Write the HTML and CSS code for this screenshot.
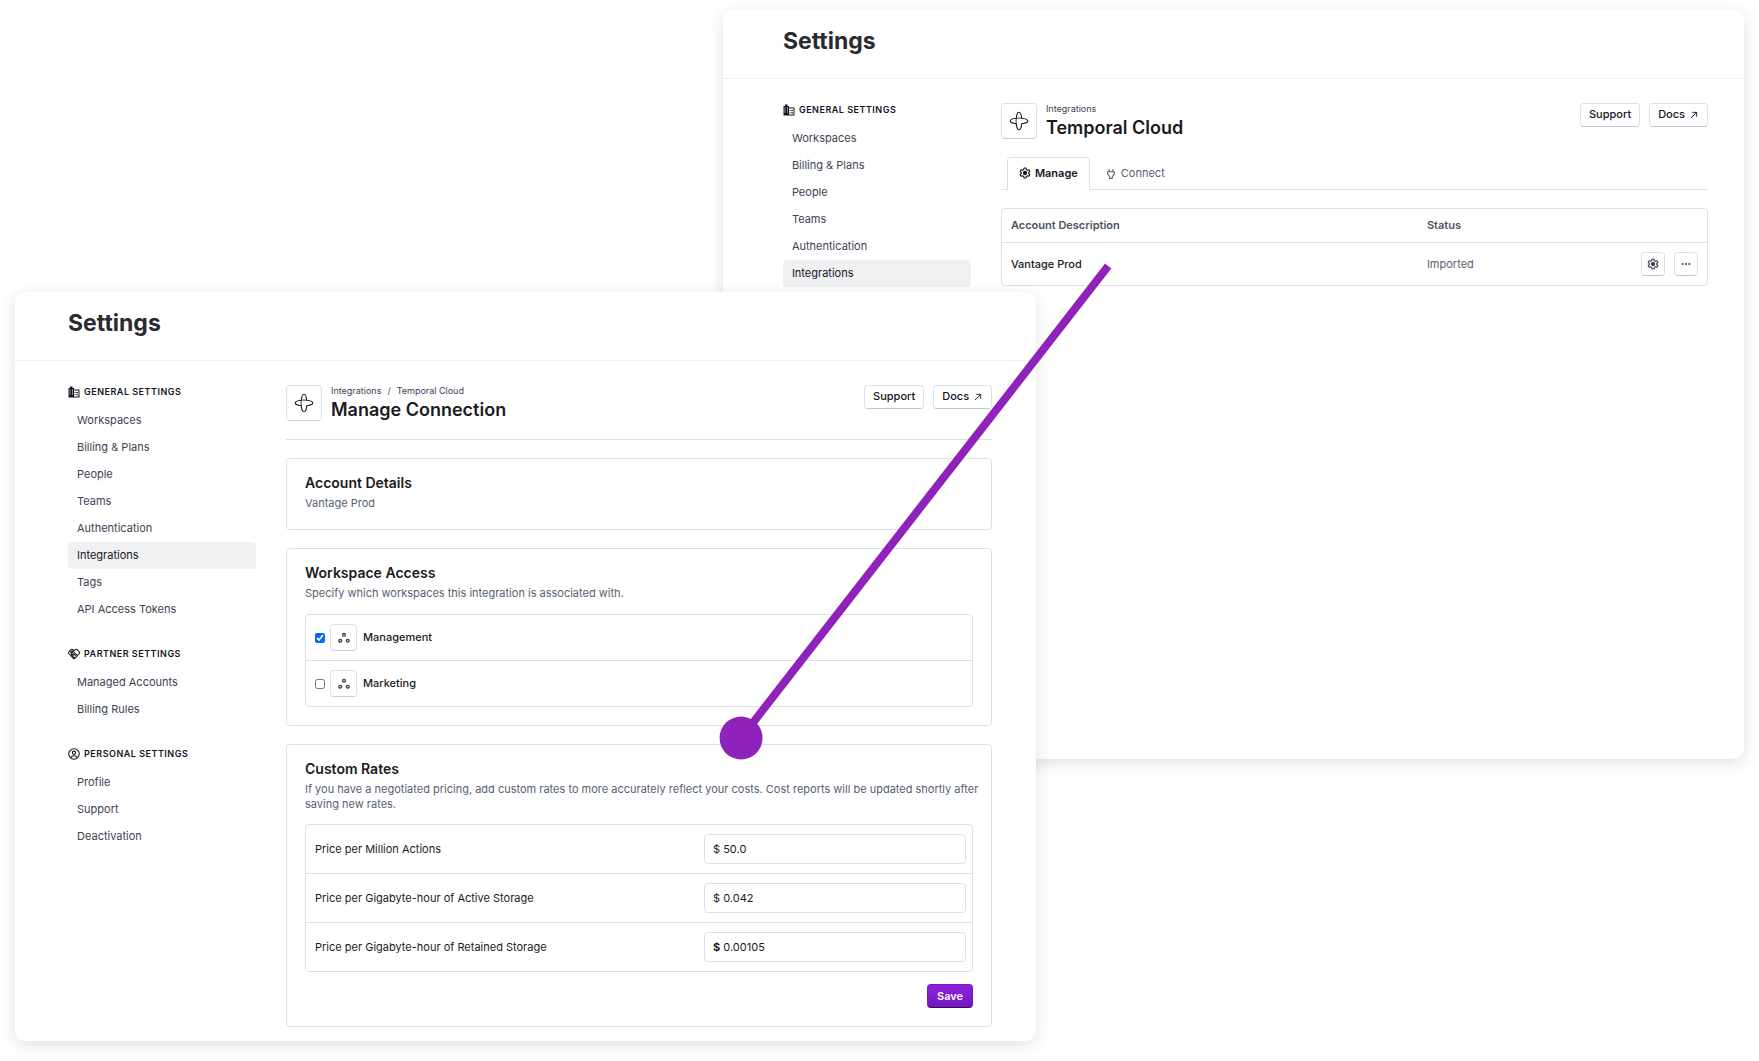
FILE: index.html
```html
<!DOCTYPE html>
<html lang="en">
<head>
  <meta charset="UTF-8" />
  <title>Settings</title>
  <meta name="viewport" content="width=device-width, initial-scale=1" />
  <link rel="stylesheet" href="styles.css">
</head>
<body>
  <!-- Shared icons -->
  <svg class="sprite" aria-hidden="true">
    <symbol id="i-building" viewBox="0 0 24 24">
      <path fill-rule="evenodd" d="M1 23V4h3V1h5v3h3v3h11v16H1zM12 9v12h9V9zM3 7v2h2V7zM8 7v2h2V7zM3 11v2h2v-2zM8 11v2h2v-2zM3 15v2h2v-2zM8 15v2h2v-2z"/>
      <path d="M13 12h2v2h-2zM13 16.500h2v2h-2zM16.500 12H20v2h-3.500zM16.500 16.500H20v2h-3.500z"/>
    </symbol>
    <symbol id="i-handshake" viewBox="0 0 24 24">
      <path fill="none" stroke="currentColor" stroke-width="2.100" stroke-linejoin="round" stroke-linecap="round" d="M12 5 9.500 3.300a3.500 3.500 0 0 0-4.500.4L2 7.200a3 3 0 0 0 0 4.300L11 21.500a1.500 1.500 0 0 0 2.200 0L22.200 11.500a3 3 0 0 0 0-4.300L19 3.700a3.500 3.500 0 0 0-4.500-.4L6.800 10.500a1.700 1.700 0 0 0 2.400 2.300L13 9l6 6M9.500 16l3.500-3.500 3.500 4M6.800 13.500 10 17l3 2.500M5 8.500l3.500-3"/>
    </symbol>
    <symbol id="i-user" viewBox="0 0 24 24">
      <g fill="none" stroke="currentColor" stroke-width="2.200">
        <circle cx="12" cy="12" r="10.500"/>
        <circle cx="12" cy="9.500" r="3.200"/>
        <path d="M5 19.500c1.500-2.700 4-4 7-4s5.500 1.300 7 4"/>
      </g>
    </symbol>
    <symbol id="i-temporal" viewBox="0 0 24 24">
      <path fill="none" stroke="currentColor" stroke-width="1.400" stroke-linejoin="round" d="M8.700 8.700C9.100 5 10.200 1.500 12 1.500s2.900 3.500 3.300 7.200c3.700.4 7.200 1.500 7.200 3.300s-3.500 2.900-7.200 3.300c-.4 3.700-1.500 7.200-3.300 7.200s-2.900-3.500-3.300-7.200C5 14.900 1.500 13.800 1.500 12S5 9.100 8.700 8.700z"/>
      <path fill="none" stroke="currentColor" stroke-width="1" d="M8.700 15.300c-.3-2.200-.3-4.400 0-6.600 2.200-.3 4.400-.3 6.600 0"/>
    </symbol>
    <symbol id="i-gear" viewBox="0 0 24 24">
      <path fill="none" stroke="currentColor" stroke-width="2.200" stroke-linejoin="round" d="M10 2h4l.6 3.200 2.100 1.200 3.100-1.100 2 3.500L19.300 11v2l2.500 2.200-2 3.500-3.100-1.100-2.100 1.200L14 22h-4l-.6-3.200-2.100-1.200-3.100 1.100-2-3.500L4.700 13v-2L2.200 8.800l2-3.500 3.100 1.100 2.100-1.200z"/>
      <circle cx="12" cy="12" r="4.300"/>
    </symbol>
    <symbol id="i-plug" viewBox="0 0 24 24">
      <path fill="none" stroke="currentColor" stroke-width="2.600" stroke-linejoin="round" d="M7.500 0v6M16.500 0v6M4 6.500h16v6L15 18v5H9v-5l-5-5.500z"/>
    </symbol>
    <symbol id="i-arrow" viewBox="0 0 24 24">
      <path fill="none" stroke="currentColor" stroke-width="2.800" d="M3 21 20 4M7 4h13v13"/>
    </symbol>
    <symbol id="i-dots" viewBox="0 0 24 24">
      <circle cx="4" cy="12" r="2.500"/><circle cx="12" cy="12" r="2.500"/><circle cx="20" cy="12" r="2.500"/>
    </symbol>
    <symbol id="i-workspace" viewBox="0 0 24 24">
      <g fill="none" stroke="currentColor" stroke-width="2.800">
        <circle cx="12" cy="5.500" r="2.800"/><circle cx="4.500" cy="17.500" r="2.800"/><circle cx="19.500" cy="17.500" r="2.800"/>
      </g>
    </symbol>
  </svg>

  <div class="canvas">
    <!-- Integration overview -->
    <section class="window window-back">
      <header class="window-header"><h1>Settings</h1></header>
      <div class="window-body">
        <nav class="sidebar">
          <div class="nav-group">
            <h2><svg class="icon"><use href="#i-building"/></svg>General Settings</h2>
            <a href="#">Workspaces</a>
            <a href="#">Billing &amp; Plans</a>
            <a href="#">People</a>
            <a href="#">Teams</a>
            <a href="#">Authentication</a>
            <a href="#" class="active">Integrations</a>
          </div>
        </nav>
        <main class="content">
          <div class="page-head">
            <span class="logo"><svg><use href="#i-temporal"/></svg></span>
            <div class="page-title">
              <div class="breadcrumb"><a href="#">Integrations</a></div>
              <h2>Temporal Cloud</h2>
            </div>
            <div class="actions">
              <button class="btn">Support</button>
              <button class="btn">Docs <svg><use href="#i-arrow"/></svg></button>
            </div>
          </div>
          <div class="tabs">
            <a href="#" class="tab tab-active"><svg class="icon"><use href="#i-gear"/></svg>Manage</a>
            <a href="#" class="tab"><svg class="icon icon-small"><use href="#i-plug"/></svg>Connect</a>
          </div>
          <table class="accounts">
            <thead>
              <tr><th class="col-account">Account Description</th><th>Status</th><th></th></tr>
            </thead>
            <tbody>
              <tr>
                <td class="account-name">Vantage Prod</td>
                <td>Imported</td>
                <td>
                  <div class="row-actions">
                    <button class="btn btn-icon" aria-label="Manage"><svg class="icon"><use href="#i-gear"/></svg></button>
                    <button class="btn btn-icon" aria-label="More"><svg class="icon icon-small"><use href="#i-dots"/></svg></button>
                  </div>
                </td>
              </tr>
            </tbody>
          </table>
        </main>
      </div>
    </section>

    <!-- Manage connection -->
    <section class="window window-front">
      <header class="window-header"><h1>Settings</h1></header>
      <div class="window-body">
        <nav class="sidebar">
          <div class="nav-group">
            <h2><svg class="icon"><use href="#i-building"/></svg>General Settings</h2>
            <a href="#">Workspaces</a>
            <a href="#">Billing &amp; Plans</a>
            <a href="#">People</a>
            <a href="#">Teams</a>
            <a href="#">Authentication</a>
            <a href="#" class="active">Integrations</a>
            <a href="#">Tags</a>
            <a href="#">API Access Tokens</a>
          </div>
          <div class="nav-group">
            <h2><svg class="icon"><use href="#i-handshake"/></svg>Partner Settings</h2>
            <a href="#">Managed Accounts</a>
            <a href="#">Billing Rules</a>
          </div>
          <div class="nav-group">
            <h2><svg class="icon"><use href="#i-user"/></svg>Personal Settings</h2>
            <a href="#">Profile</a>
            <a href="#">Support</a>
            <a href="#">Deactivation</a>
          </div>
        </nav>
        <main class="content">
          <div class="page-head page-head-line">
            <span class="logo"><svg><use href="#i-temporal"/></svg></span>
            <div class="page-title">
              <div class="breadcrumb"><a href="#">Integrations</a><span>/</span><a href="#">Temporal Cloud</a></div>
              <h2>Manage Connection</h2>
            </div>
            <div class="actions">
              <button class="btn">Support</button>
              <button class="btn">Docs <svg><use href="#i-arrow"/></svg></button>
            </div>
          </div>

          <div class="card">
            <h3>Account Details</h3>
            <p>Vantage Prod</p>
          </div>

          <div class="card">
            <h3>Workspace Access</h3>
            <p>Specify which workspaces this integration is associated with.</p>
            <div class="rows">
              <label class="workspace">
                <input type="checkbox" checked>
                <span class="workspace-icon"><svg><use href="#i-workspace"/></svg></span>
                Management
              </label>
              <label class="workspace">
                <input type="checkbox">
                <span class="workspace-icon"><svg><use href="#i-workspace"/></svg></span>
                Marketing
              </label>
            </div>
          </div>

          <form class="card">
            <h3>Custom Rates</h3>
            <p>If you have a negotiated pricing, add custom rates to more accurately reflect your costs. Cost reports will be updated shortly after saving new rates.</p>
            <div class="rows rates">
              <div class="rate">
                <label for="rate-actions">Price per Million Actions</label>
                <div class="money"><span>$</span><input id="rate-actions" type="text" value="50.0"></div>
              </div>
              <div class="rate">
                <label for="rate-active">Price per Gigabyte-hour of Active Storage</label>
                <div class="money"><span>$</span><input id="rate-active" type="text" value="0.042"></div>
              </div>
              <div class="rate">
                <label for="rate-retained">Price per Gigabyte-hour of Retained Storage</label>
                <div class="money"><span class="bold">$</span><input id="rate-retained" type="text" value="0.00105"></div>
              </div>
            </div>
            <div class="form-footer"><button type="button" class="btn btn-primary">Save</button></div>
          </form>
        </main>
      </div>
    </section>

    <!-- Pointer from the account row to the rates form -->
    <svg class="pointer" aria-hidden="true">
      <line x1="63%" y1="266" x2="42.130%" y2="738"/>
      <circle cx="42.130%" cy="738" r="21.500"/>
    </svg>
  </div>
</body>
</html>
```
FILE: styles.css
```css
* { box-sizing: border-box; }

body {
  margin: 0; background: #fff; color: #1a1a1e;
  font-family: Inter, sans-serif; font-size: 11px; line-height: 15px;
}

h1, h2, h3, p { margin: 0; }
a { color: inherit; text-decoration: none; }
svg { display: block; fill: currentColor; }
button, input { font: inherit; color: inherit; }

.sprite { position: absolute; width: 0; height: 0; }
.icon { width: 12px; height: 12px; flex: none; }
.icon-small { width: 10px; height: 10px; }

.canvas { position: relative; min-height: 1061px; overflow: hidden; }

/* Windows */
.window {
  position: absolute; width: 58.05%; min-height: 749px; padding-bottom: 14px;
  background: #fff; border-radius: 10px;
  box-shadow: 0 4px 16px rgba(0, 0, 0, 0.12);
}
.window-back { top: 10px; right: 15px; }
.window-front { top: 292px; left: 15px; }

.window-header { height: 69px; padding: 16px 53px 0; border-bottom: 1px solid #eeeff2; }
.window-header h1 { font-size: 23px; line-height: 30px; font-weight: 700; color: #2a2a31; }

.window-body { display: flex; gap: 30px; padding: 24px 44px 0 53px; }
.window-back .window-header { padding-left: 60px; }
.window-back .window-body { padding-left: 60px; padding-right: 36px; }

/* Sidebar */
.sidebar {
  width: 188px; flex: none; margin-top: -1px;
  display: flex; flex-direction: column; gap: 23px;
}
.nav-group h2 {
  display: flex; align-items: center; gap: 4px; margin-bottom: 8px;
  font-size: 9px; line-height: 15px; font-weight: 600; letter-spacing: 0.5px;
  text-transform: uppercase; color: #14161f;
}
.nav-group a {
  display: block; padding: 6px 9px; border-radius: 4px; color: #3c4353;
}
.nav-group .active { background: #f0f1f3; color: #14161f; }

/* Page head */
.content { flex: 1; min-width: 0; }
.page-head { display: flex; align-items: flex-start; gap: 9px; height: 36px; }
.page-head-line { height: 55px; margin-bottom: 18px; border-bottom: 1px solid #dfe0e7; }

.logo, .workspace-icon {
  display: flex; align-items: center; justify-content: center; flex: none;
  border: 1px solid #dfe0e7; border-bottom-color: #cbccd9; border-radius: 4px;
}
.logo { width: 36px; height: 36px; }
.logo svg { width: 20px; height: 20px; }

.page-title { flex: 1; }
.breadcrumb { display: flex; gap: 6px; font-size: 9px; line-height: 12px; color: #3c4353; }
.page-title h2 { font-size: 18px; line-height: 26px; font-weight: 600; }

.actions, .row-actions { display: flex; justify-content: flex-end; gap: 9px; }
.btn {
  display: flex; align-items: center; gap: 5px; height: 24px; padding: 0 8px 1px;
  background: #fff; border: 1px solid #dfe0e7; border-bottom-color: #c3c6d4;
  border-radius: 4px; font-weight: 500; color: #14161f;
}
.actions .btn svg { width: 8px; height: 8px; margin-right: 1px; }
.btn-icon { width: 24px; padding: 0; justify-content: center; color: #3c4353; }
.btn-primary {
  padding: 0 9px; font-weight: 600; color: #fff;
  background: linear-gradient(#8c22dd, #7315bd);
  border-color: #7617bf; border-bottom-color: #35085c;
}

/* Tabs */
.tabs {
  display: flex; margin: 18px 0; padding-left: 6px;
  border-bottom: 1px solid #dfe0e7;
}
.tab {
  display: flex; align-items: center; gap: 4px; height: 32px; padding: 0 11px;
  color: #565f73; border: 1px solid transparent; border-bottom: 0;
}
.tab .icon-small { margin-right: 1px; }
.tab + .tab { margin-left: 4px; }
.tab-active {
  height: 33px; margin-bottom: -1px; padding-bottom: 2px;
  background: #fff; font-weight: 600; color: #14161f;
  border-color: #dfe0e7; border-radius: 4px 4px 0 0;
}

/* Accounts table */
.accounts {
  width: 100%; border: 1px solid #dfe0e7; border-radius: 4px;
  border-spacing: 0; text-align: left; color: #565f73;
}
.accounts th { height: 34px; padding: 0 9px; font-weight: 600; color: #4b5365; border-bottom: 1px solid #dfe0e7; }
.accounts td { padding: 9px; }
.accounts .col-account { width: 59%; }
.accounts .account-name { font-weight: 500; color: #1a1a1e; }

/* Cards */
.card {
  padding: 17px 18px 18px; border: 1px solid #dfe0e7; border-radius: 4px;
}
.card + .card { margin-top: 18px; }
.card h3 { font-size: 14px; line-height: 14px; font-weight: 600; margin-bottom: 6px; }
.card p { margin-right: -9px; color: #565f73; }

.rows { margin-top: 13px; border: 1px solid #dfe0e7; border-radius: 4px; }
.rows > * + * { border-top: 1px solid #dfe0e7; }

.workspace { display: flex; align-items: center; padding: 9px; font-weight: 500; }
.workspace input { width: 10px; height: 10px; margin: 0 5px 0 0; accent-color: #0a66f5; }
.workspace-icon { width: 27px; height: 27px; margin-right: 6px; color: #3c4353; }
.workspace-icon svg { width: 12px; height: 12px; }

.rates { margin-top: 12px; }
.rate { display: flex; align-items: center; justify-content: space-between; padding: 9px 6px 9px 9px; }
.money {
  display: flex; align-items: center; gap: 3px; width: 262px; height: 30px; padding: 0 8px;
  border: 1px solid #dfe0e7; border-radius: 4px;
}
.money .bold { font-weight: 700; }
.money input { flex: 1; min-width: 0; padding: 0; border: 0; outline: 0; background: none; }

.form-footer { display: flex; justify-content: flex-end; margin-top: 12px; }

/* Pointer */
.pointer { position: absolute; inset: 0; width: 100%; height: 100%; pointer-events: none; }
.pointer line { stroke: #8e22ba; stroke-width: 8; }
.pointer circle { fill: #8e22ba; }
```
